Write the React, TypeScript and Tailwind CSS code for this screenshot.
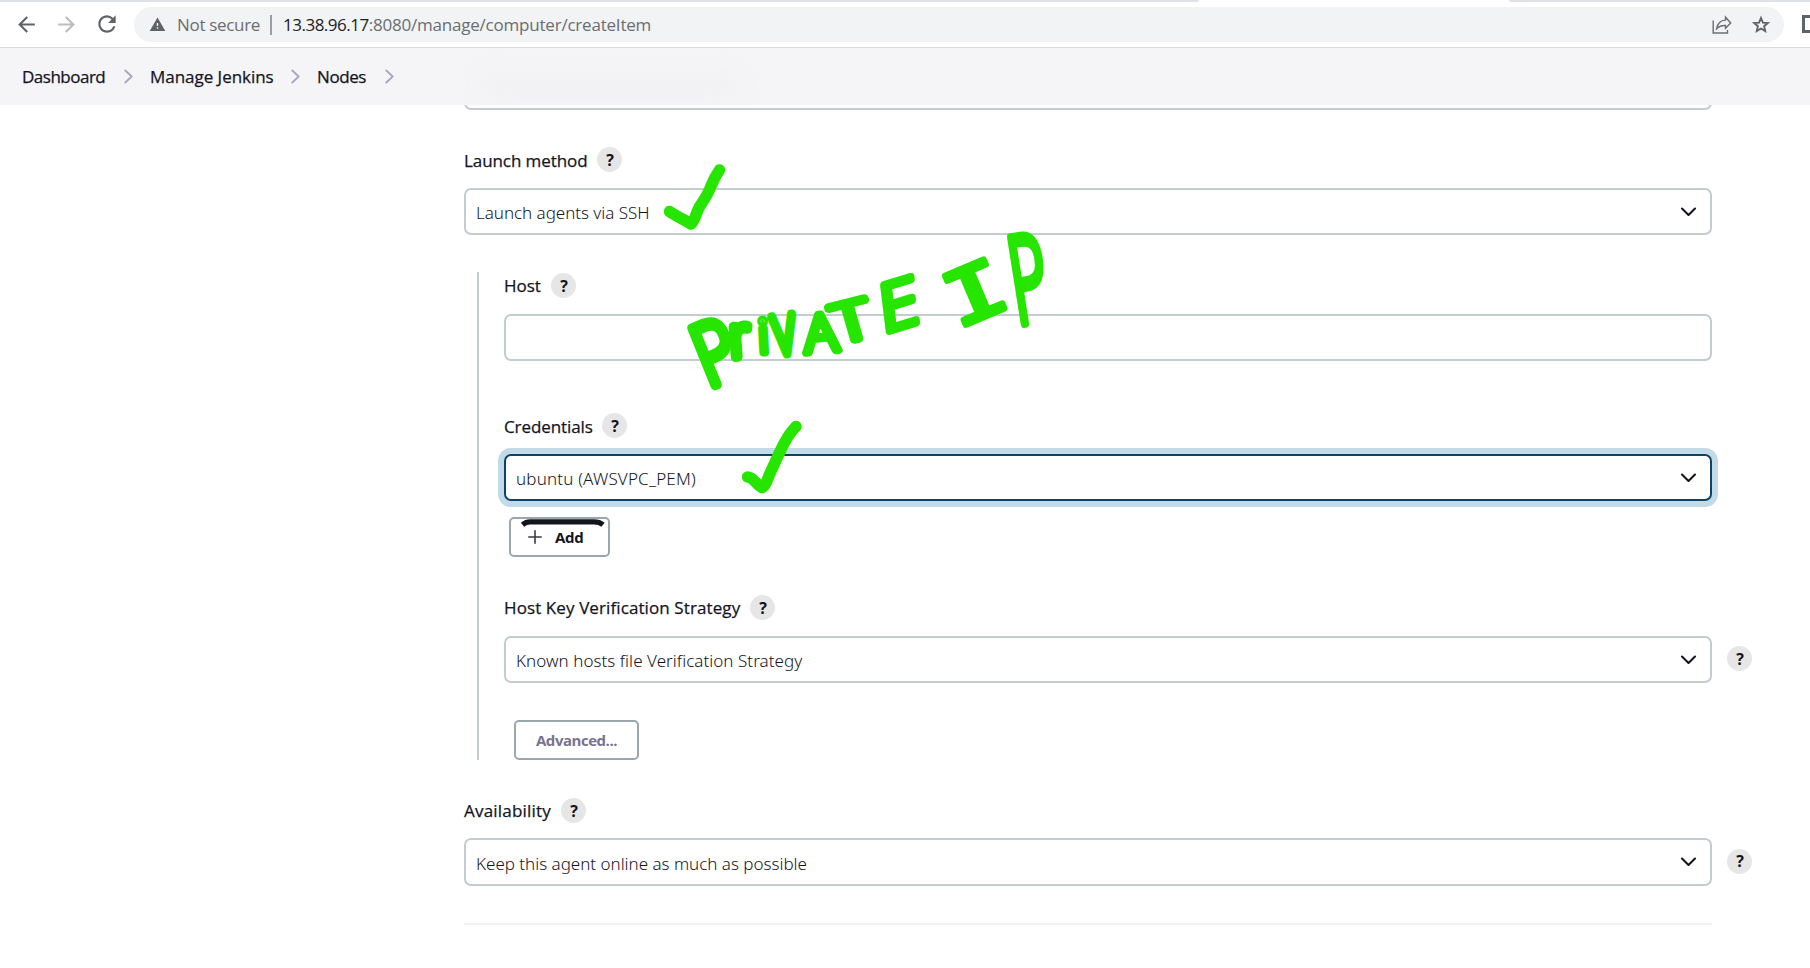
import type { ReactNode } from "react";
import { MdArrowBack, MdArrowForward, MdRefresh, MdWarning } from "react-icons/md";

const INK = "#26e600";

function Help() {
  return (
    <span className="flex size-[25px] shrink-0 items-center justify-center rounded-full bg-[#e6e6e6] pl-px font-['Open_Sans',sans-serif] text-[16px] leading-none font-bold text-[#14141f]">
      ?
    </span>
  );
}

function Label({ text, tracking }: { text: string; tracking: string }) {
  return (
    <div className="flex h-[25px] items-center gap-[10px]">
      <span className={`text-[17px] leading-[25px] font-medium whitespace-nowrap text-[#14141f] [-webkit-text-stroke:0.25px_#14141f] ${tracking}`}>{text}</span>
      <Help />
    </div>
  );
}

function Select({ text, tracking, focused, height = "h-[47px]", help }: { text: string; tracking: string; focused?: boolean; height?: string; help?: boolean }) {
  return (
    <div className="flex items-center">
      <div
        className={`flex w-full shrink-0 items-center justify-between rounded-[7px] border-2 bg-white pr-[13px] pl-[10px] ${height} ${
          focused ? "border-[#0b4466] shadow-[0_0_0_6px_#c3dae7]" : "border-[#c3cccf]"
        }`}
      >
        <span className={`pt-[3px] font-['Noto_Sans',sans-serif] text-[17px] leading-6 font-light whitespace-nowrap text-[#14141f] ${tracking}`}>{text}</span>
        <svg className="h-[10px] w-[17px]" viewBox="0 0 17 10" fill="none" stroke="#14141f" strokeWidth="2.1" strokeLinecap="round" strokeLinejoin="round">
          <path d="M2 1.6 8.5 8 15 1.6" />
        </svg>
      </div>
      {help && <div className="mb-[2px] ml-[15px]"><Help /></div>}
    </div>
  );
}

function Crumb({ children, tracking, gap }: { children: ReactNode; tracking: string; gap: string }) {
  return (
    <div className={`flex items-center ${gap}`}>
      <span className={`text-[17px] font-medium whitespace-nowrap text-[#14141f] [-webkit-text-stroke:0.25px_#14141f] ${tracking}`}>{children}</span>
      <svg className="h-[15px] w-[9px]" viewBox="0 0 9 15" fill="none" stroke="#aba7c0" strokeWidth="1.9" strokeLinecap="round" strokeLinejoin="round">
        <path d="M1.3 1.5 7.7 7.5 1.3 13.5" />
      </svg>
    </div>
  );
}

const LETTERS = [
  { c: "P", x: 708, y: 388, size: 86, rot: -22, skew: 0, sx: 0.8, w: 10 },
  { c: "r", x: 731, y: 357, size: 56, rot: -4, skew: 0, sx: 0.9, w: 10.5 },
  { c: "i", x: 759, y: 353, size: 46, rot: -3, skew: 0, sx: 1, w: 7.5 },
  { c: "V", x: 776, y: 355, size: 53, rot: -8, skew: 0, sx: 0.72, w: 10 },
  { c: "A", x: 806, y: 353, size: 52, rot: -5, skew: 0, sx: 1.05, w: 7.5 },
  { c: "T", x: 839, y: 344, size: 54, rot: -14, skew: 2, sx: 1.3, w: 7.5 },
  { c: "E", x: 883, y: 333, size: 64, rot: -17, skew: -10, sx: 1.1, w: 7.5 },
  { c: "I", x: 957, y: 329, size: 82, rot: -23, skew: 0, sx: 1.25, w: 5.5 },
  { c: "P", x: 1017, y: 324, size: 120, rot: -9, skew: 0, sx: 0.52, w: 10 },
];

function Annotations() {
  return (
    <svg className="pointer-events-none absolute top-0 left-0 h-[968px] w-[1810px]" viewBox="0 0 1810 968" fill="none" stroke={INK} strokeLinecap="round" strokeLinejoin="round">
      <path strokeWidth="11.5" d="M669.5 211.5C676 216 683 219 691 224C695 221 696 212 700 206C704 200 709 192 711 186C713 181 716 175 719.5 170" />
      <path strokeWidth="11.5" d="M747.5 477C753 477 757 485 762 487.5C766 486 768 477 771 471C776 461 781 448 786 440C789 434 792 431 796 426.5" />
      {LETTERS.map((l, i) => (
        <text
          key={i}
          fill={INK}
          strokeWidth={l.w}
          fontSize={l.size}
          fontWeight={300}
          fontFamily={l.c === "I" ? "Liberation Mono, monospace" : "Open Sans, sans-serif"}
          transform={`translate(${l.x} ${l.y}) rotate(${l.rot}) skewX(${l.skew}) scale(${l.sx} 1)`}
        >
          {l.c}
        </text>
      ))}
    </svg>
  );
}

export default function App() {
  return (
    <div className="relative flex h-[968px] w-[1810px] flex-col overflow-hidden bg-white font-['Open_Sans',sans-serif]">
      <div className="flex h-[2px] shrink-0 justify-between">
        <div className="w-[1199px] rounded-br-[3px] bg-[#dee1e6]" />
        <div className="w-[301px] rounded-bl-[3px] bg-[#dee1e6]" />
      </div>

      <div className="flex h-[46px] shrink-0 items-start overflow-hidden border-b border-[#dadbdd] pt-[5px]">
        <div className="flex h-[34px] w-[134px] shrink-0 items-center pl-[14px] text-[#5f6368]">
          <MdArrowBack size={25} />
          <MdArrowForward size={25} className="ml-[15px] text-[#babcbe]" />
          <MdRefresh size={26} className="ml-[15px]" />
        </div>
        <div className="flex h-[35px] w-[1650px] shrink-0 items-center rounded-full bg-[#f1f3f4] text-[17px]">
          <MdWarning size={17} className="ml-[15px] text-[#5f6368]" />
          <span className="ml-[11px] w-[83px] tracking-[-0.32px] whitespace-nowrap text-[#6a6d72]">Not secure</span>
          <span className="ml-[10px] h-5 w-[2px] bg-[#9b9ea2]" />
          <span className="ml-[11px] tracking-[-0.21px] whitespace-nowrap text-[#6a6d72]">
            <span className="tracking-[-0.5px] text-[#202124]">13.38.96.17</span>:8080/manage/computer/createItem
          </span>
          <span className="flex-1" />
          <svg className="h-[20px] w-[20px]" viewBox="0 0 20 20" fill="none" stroke="#6a6d72" strokeWidth="1.4">
            <path d="M1.2 5.5V18H15.5V15M4.7 13.7C5.5 8.5 9 5.3 13.5 5.1V2.2L18.7 8 13.5 13.3V10.5C9.5 10.3 6.8 11.5 4.7 13.7Z" />
          </svg>
          <svg className="mr-[12px] ml-[18px] size-[22px]" viewBox="0 0 22 22" fill="none" stroke="#5f6368" strokeWidth="1.9">
            <path d="M11 4 12.9 8.600 17.800 9 14.100 12.200 15.200 17.100 11 14.500 6.800 17.100 7.900 12.200 4.200 9 9.100 8.600Z" />
          </svg>
        </div>
        <div className="mt-[8px] ml-[18px] h-[18px] w-[24px] shrink-0 border-[3px] border-[#5f6368]" />
      </div>

      <div className="relative flex h-[57px] shrink-0 items-center overflow-hidden bg-[#f5f5f8] pl-[22px]">
        <div className="absolute top-[24px] left-[480px] h-7 w-[260px] rounded-full bg-[#f1f1f4] blur-[10px]" />
        <Crumb tracking="w-[83px] tracking-[-0.5px]" gap="gap-[19px]">Dashboard</Crumb>
        <div className="w-[17px]" />
        <Crumb tracking="w-[123px] tracking-[-0.03px]" gap="gap-[18px]">Manage Jenkins</Crumb>
        <div className="w-[17px]" />
        <Crumb tracking="w-[49px] tracking-[-0.4px]" gap="gap-[19px]">Nodes</Crumb>
      </div>

      <main className="ml-[464px] flex w-[1248px] flex-col">
        <div className="h-[5px] overflow-hidden">
          <div className="-mt-[42px] h-[47px] rounded-[7px] border-2 border-[#c3cccf]" />
        </div>

        <div className="mt-[37px]"><Label text="Launch method" tracking="w-[123px] pt-[2px] tracking-[-0.08px]" /></div>
        <div className="mt-4"><Select text="Launch agents via SSH" tracking="tracking-[-0.03px]" /></div>

        <div className="mt-[37px] ml-[13px] flex h-[488px] flex-col border-l-2 border-[#c3cccf] pl-[25px]">
          <div className="mt-px"><Label text="Host" tracking="w-[37px]" /></div>
          <div className="mt-4 h-[47px] shrink-0 rounded-[7px] border-2 border-[#c3cccf] bg-white" />

          <div className="mt-[52px]"><Label text="Credentials" tracking="w-[88px] pt-[2px] tracking-[-0.1px]" /></div>
          <div className="mt-4"><Select text="ubuntu (AWSVPC_PEM)" tracking="tracking-[0.18px]" focused /></div>
          <button className="relative mt-4 ml-[5px] flex h-10 w-[101px] shrink-0 items-center rounded-[5px] border-2 border-[#9ba7af] pl-[17px] text-[15px] font-bold text-[#14141f]">
            <svg className="absolute -top-[1px] left-[9px] h-[9px] w-[86px]" viewBox="0 0 86 9" fill="none" stroke="#14141f" strokeWidth="5.2">
              <path d="M2.5 6.7Q6 3.8 10 3.8H74Q79.5 3.8 83 6.7" />
            </svg>
            <svg className="size-[14px]" viewBox="0 0 14 14" stroke="#3b3b46" strokeWidth="1.6" strokeLinecap="round">
              <path d="M7 .8V13.2M.8 7H13.2" />
            </svg>
            <span className="ml-[13px] tracking-[-0.35px]">Add</span>
          </button>

          <div className="mt-[38px]"><Label text="Host Key Verification Strategy" tracking="w-[236px] tracking-[0.1px]" /></div>
          <div className="mt-4"><Select text="Known hosts file Verification Strategy" tracking="tracking-[0.05px]" help /></div>

          <button className="mt-[37px] ml-[10px] flex h-10 w-[125px] shrink-0 items-center justify-center rounded-[5px] border-2 border-[#9ba7af] text-[15px] font-bold tracking-[-0.47px] text-[#77738f]">
            Advanced...
          </button>
        </div>

        <div className="mt-[38px]"><Label text="Availability" tracking="w-[87px] tracking-[0.2px]" /></div>
        <div className="mt-[15px]"><Select text="Keep this agent online as much as possible" tracking="tracking-[-0.01px]" height="h-[48px]" help /></div>
        <div className="mt-[37px] h-[2px] bg-[#f1f1f6]" />
      </main>

      <Annotations />
    </div>
  );
}
